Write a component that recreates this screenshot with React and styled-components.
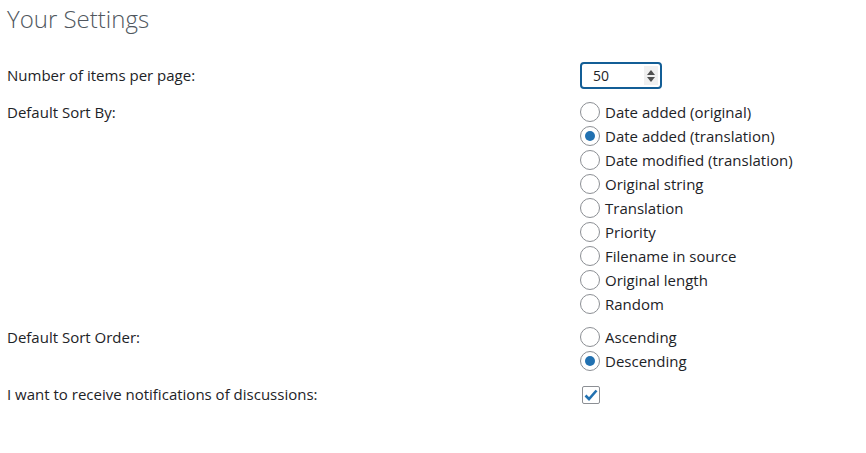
import React, { useState } from "react";
import styled, { createGlobalStyle } from "styled-components";

const GlobalStyle = createGlobalStyle`
  body {
    margin: 0;
    background: #fff;
    font-family: "Open Sans", "Liberation Sans", sans-serif;
    color: #1d2327;
  }
`;

const Page = styled.div`
  padding: 4px 7px 0 7px;
`;

const Title = styled.h2`
  margin: 0 0 28px 0;
  font-size: 24px;
  font-weight: 300;
  color: #50575e;
  line-height: 30px;
`;

const Form = styled.div`
  display: grid;
  grid-template-columns: 573px 1fr;
  row-gap: 9px;
  font-size: 15px;
`;

const Label = styled.div`
  line-height: ${({ $tall }) => ($tall ? "27px" : "24px")};
  padding-bottom: ${({ $tall }) => ($tall ? "2px" : "0")};
`;

const Options = styled.div`
  display: flex;
  flex-direction: column;
`;

const Option = styled.label`
  display: flex;
  align-items: center;
  gap: 5px;
  height: 24px;
  cursor: pointer;
`;

const Radio = styled.span`
  box-sizing: border-box;
  width: 20px;
  height: 20px;
  border-radius: 50%;
  border: 1px solid #8c8f94;
  background: #fff;
  display: flex;
  align-items: center;
  justify-content: center;
  &::after {
    content: "";
    width: 10px;
    height: 10px;
    border-radius: 50%;
    background: #2271b1;
    display: ${({ $on }) => ($on ? "block" : "none")};
  }
`;

const NumberBox = styled.div`
  box-sizing: border-box;
  width: 82px;
  height: 27px;
  border: 2px solid #135e96;
  border-radius: 4px;
  display: flex;
  align-items: center;
  justify-content: space-between;
  padding: 0 2px 0 11px;
  font-size: 14px;
`;

const Spinner = styled.div`
  width: 14px;
  height: 19px;
  background: #f0f0f0;
  display: flex;
  flex-direction: column;
  align-items: center;
  justify-content: center;
  gap: 2px;
`;

const CheckCell = styled.div`
  display: flex;
  align-items: center;
  height: 24px;
`;

const Checkbox = styled.span`
  box-sizing: border-box;
  display: flex;
  align-items: center;
  justify-content: center;
  width: 18px;
  height: 18px;
  border: 1px solid #8c8f94;
  border-radius: 2px;
  margin: 2px 0 0 2px;
`;

const sortBy = [
  "Date added (original)",
  "Date added (translation)",
  "Date modified (translation)",
  "Original string",
  "Translation",
  "Priority",
  "Filename in source",
  "Original length",
  "Random",
];

export default function App() {
  const [by, setBy] = useState(1);
  const [order, setOrder] = useState(1);

  return (
    <Page>
      <GlobalStyle />
      <Title>Your Settings</Title>
      <Form>
        <Label $tall>Number of items per page:</Label>
        <div>
          <NumberBox>
            <span>50</span>
            <Spinner>
              <svg width="8" height="5" viewBox="0 0 8 5">
                <path d="M4 0L8 5H0z" fill="#505050" />
              </svg>
              <svg width="8" height="5" viewBox="0 0 8 5">
                <path d="M0 0H8L4 5z" fill="#505050" />
              </svg>
            </Spinner>
          </NumberBox>
        </div>

        <Label>Default Sort By:</Label>
        <Options>
          {sortBy.map((s, i) => (
            <Option key={s} onClick={() => setBy(i)}>
              <Radio $on={by === i} />
              {s}
            </Option>
          ))}
        </Options>

        <Label>Default Sort Order:</Label>
        <Options>
          {["Ascending", "Descending"].map((s, i) => (
            <Option key={s} onClick={() => setOrder(i)}>
              <Radio $on={order === i} />
              {s}
            </Option>
          ))}
        </Options>

        <Label>I want to receive notifications of discussions:</Label>
        <CheckCell>
          <Checkbox>
            <svg width="14" height="12" viewBox="0 0 14 12">
              <path d="M1.5 6.5L5 10L12.5 1.5" stroke="#2271b1" strokeWidth="2.6" fill="none" />
            </svg>
          </Checkbox>
        </CheckCell>
      </Form>
    </Page>
  );
}
